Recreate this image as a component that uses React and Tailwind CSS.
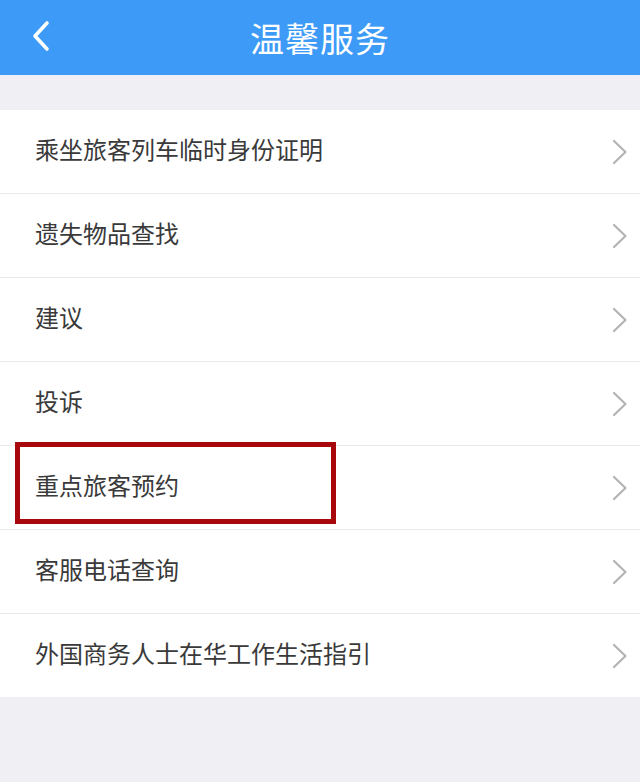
import React from 'react';

const items = [
  '乘坐旅客列车临时身份证明',
  '遗失物品查找',
  '建议',
  '投诉',
  '重点旅客预约',
  '客服电话查询',
  '外国商务人士在华工作生活指引',
];

const Chevron = () => (
  <svg width="16" height="26" viewBox="0 0 16 26" fill="none">
    <path d="M2 2 L13.5 13 L2 24" stroke="#b3b3b3" strokeWidth="2.2" strokeLinecap="round" strokeLinejoin="round" />
  </svg>
);

const App = () => {
  return (
    <div
      className="w-[640px] h-[782px] bg-[#efeff4] overflow-hidden"
      style={{ fontFamily: '"Noto Sans CJK SC", "Noto Sans", sans-serif' }}
    >
      <header className="relative h-[75px] bg-[#3d9af7] flex items-center justify-center">
        <button className="absolute left-[30px] top-[20px]">
          <svg width="22" height="32" viewBox="0 0 22 32" fill="none">
            <path d="M17 3 L5 16 L17 29" stroke="white" strokeWidth="3.6" strokeLinecap="round" strokeLinejoin="round" />
          </svg>
        </button>
        <h1 className="text-white text-[34px] leading-none tracking-[1px]">温馨服务</h1>
      </header>

      <ul className="mt-[35px] bg-white">
        {items.map((label, i) => (
          <li
            key={label}
            className={`relative flex items-center justify-between pl-[35px] pr-[12px] ${i > 0 ? 'h-[84px] border-t border-[#ebebeb]' : 'h-[83px]'}`}
          >
            {label === '重点旅客预约' && (
              <div className="absolute left-[15px] top-[-4px] w-[321px] h-[82px] border-[5px] border-[#a8080b]" />
            )}
            <span className="text-[#3a3a3a] text-[24px] leading-none pb-[6px]">{label}</span>
            <Chevron />
          </li>
        ))}
      </ul>
    </div>
  );
};

export default App;
